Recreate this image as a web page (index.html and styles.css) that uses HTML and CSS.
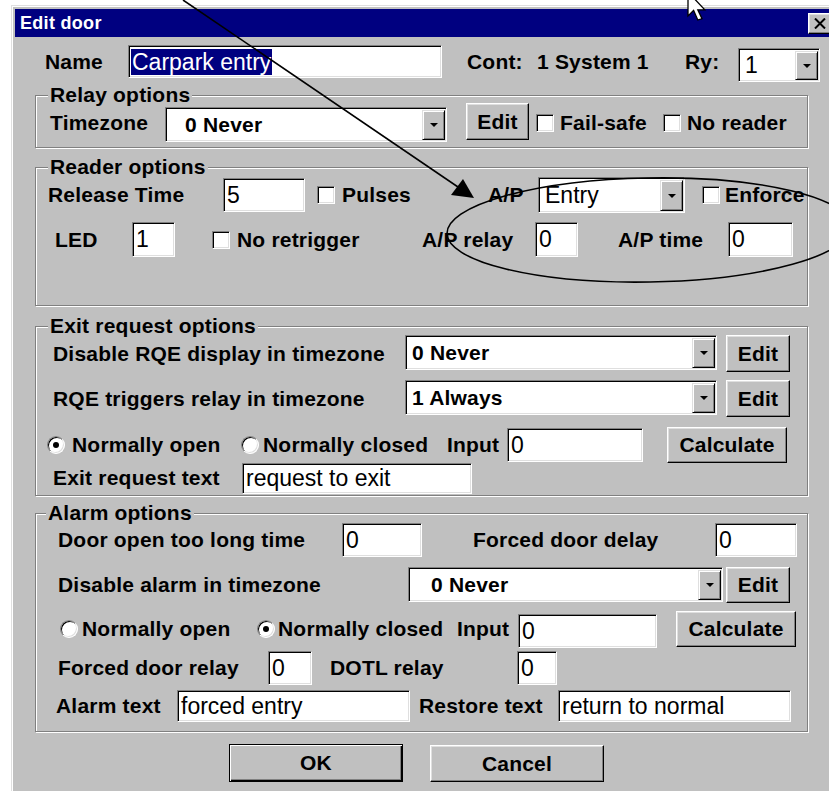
FILE: index.html
```html
<!DOCTYPE html>
<html lang="en">
<head>
<meta charset="utf-8">
<title>Edit door</title>
<link rel="stylesheet" href="styles.css">
</head>
<body>
<div class="window">
  <div class="titlebar">
    <span class="caption">Edit door</span>
    <span class="close-btn">
      <svg width="12" height="11" viewBox="0 0 12 11"><path d="M1 0.5 L11 10.5 M11 0.5 L1 10.5" stroke="#000" stroke-width="2"/></svg>
    </span>
  </div>

  <div class="client">
    <!-- door name and controller -->
    <div class="row row-name">
      <span class="lbl name-lbl">Name</span>
      <span class="edit name-edit"><span class="sel">Carpark entry</span></span>
      <span class="lbl cont-lbl">Cont:</span>
      <span class="lbl sys-lbl">1 System 1</span>
      <span class="lbl ry-lbl">Ry:</span>
      <span class="combo ry-combo"><span class="combo-val reg">1</span><span class="drop"></span></span>
    </div>

    <!-- relay -->
    <div class="group relay-group">
      <div class="group-title">Relay options</div>
      <div class="row relay-row">
        <span class="lbl tz-lbl">Timezone</span>
        <span class="combo tz-combo"><span class="combo-val">0 Never</span><span class="drop"></span></span>
        <button class="btn tz-edit">Edit</button>
        <label class="chk failsafe-chk"><span class="box"></span>Fail-safe</label>
        <label class="chk noreader-chk"><span class="box"></span>No reader</label>
      </div>
    </div>

    <!-- reader -->
    <div class="group reader-group">
      <div class="group-title">Reader options</div>
      <div class="row reader-row1">
        <span class="lbl release-lbl">Release Time</span>
        <span class="edit release-edit">5</span>
        <label class="chk pulses-chk"><span class="box"></span>Pulses</label>
        <span class="lbl ap-lbl">A/P</span>
        <span class="combo ap-combo"><span class="combo-val reg">Entry</span><span class="drop"></span></span>
        <label class="chk enforce-chk"><span class="box"></span>Enforce</label>
      </div>
      <div class="row reader-row2">
        <span class="lbl led-lbl">LED</span>
        <span class="edit small-edit">1</span>
        <label class="chk retrig-chk"><span class="box"></span>No retrigger</label>
        <span class="lbl aprelay-lbl">A/P relay</span>
        <span class="edit small-edit">0</span>
        <span class="lbl aptime-lbl">A/P time</span>
        <span class="edit aptime-edit">0</span>
      </div>
    </div>

    <!-- exit request -->
    <div class="group exit-group">
      <div class="group-title">Exit request options</div>
      <div class="row exit-row1">
        <span class="lbl rqe-lbl">Disable RQE display in timezone</span>
        <span class="combo rqe-combo"><span class="combo-val">0 Never</span><span class="drop"></span></span>
        <button class="btn rqe-edit">Edit</button>
      </div>
      <div class="row exit-row2">
        <span class="lbl rqe-lbl">RQE triggers relay in timezone</span>
        <span class="combo rqe-combo"><span class="combo-val">1 Always</span><span class="drop"></span></span>
        <button class="btn rqe-edit">Edit</button>
      </div>
      <div class="row exit-row3">
        <label class="opt exit-open"><span class="dot checked"></span>Normally open</label>
        <label class="opt exit-closed"><span class="dot"></span>Normally closed</label>
        <span class="lbl exit-input-lbl">Input</span>
        <span class="edit exit-input">0</span>
        <button class="btn calc-btn exit-calc">Calculate</button>
      </div>
      <div class="row exit-row4">
        <span class="lbl exit-text-lbl">Exit request text</span>
        <span class="edit exit-text">request to exit</span>
      </div>
    </div>

    <!-- alarm -->
    <div class="group alarm-group">
      <div class="group-title">Alarm options</div>
      <div class="row alarm-row1">
        <span class="lbl dotl-time-lbl">Door open too long time</span>
        <span class="edit dotl-time">0</span>
        <span class="lbl forced-delay-lbl">Forced door delay</span>
        <span class="edit forced-delay">0</span>
      </div>
      <div class="row alarm-row2">
        <span class="lbl alarm-tz-lbl">Disable alarm in timezone</span>
        <span class="combo alarm-combo"><span class="combo-val">0 Never</span><span class="drop"></span></span>
        <button class="btn alarm-edit">Edit</button>
      </div>
      <div class="row alarm-row3">
        <label class="opt alarm-open"><span class="dot"></span>Normally open</label>
        <label class="opt alarm-closed"><span class="dot checked"></span>Normally closed</label>
        <span class="lbl alarm-input-lbl">Input</span>
        <span class="edit alarm-input">0</span>
        <button class="btn calc-btn alarm-calc">Calculate</button>
      </div>
      <div class="row alarm-row4">
        <span class="lbl forced-relay-lbl">Forced door relay</span>
        <span class="edit forced-relay">0</span>
        <span class="lbl dotl-relay-lbl">DOTL relay</span>
        <span class="edit dotl-relay">0</span>
      </div>
      <div class="row alarm-row5">
        <span class="lbl alarm-text-lbl">Alarm text</span>
        <span class="edit text-edit">forced entry</span>
        <span class="lbl restore-text-lbl">Restore text</span>
        <span class="edit text-edit">return to normal</span>
      </div>
    </div>

    <div class="row actions">
      <button class="btn default ok-btn">OK</button>
      <button class="btn cancel-btn">Cancel</button>
    </div>
  </div>
</div>

<!-- hand-drawn callout over the A/P settings -->
<svg class="callout" width="829" height="791" viewBox="0 0 829 791">
  <line x1="183" y1="0" x2="458" y2="187" stroke="#000" stroke-width="1.6"/>
  <polygon points="451,195 463,179 474,198" fill="#000"/>
  <ellipse cx="649" cy="230" rx="202" ry="52" fill="none" stroke="#000" stroke-width="1.6" transform="rotate(-1 649 230)"/>
</svg>

<!-- mouse pointer -->
<svg class="pointer" width="20" height="32" viewBox="0 0 20 32">
  <path d="M1 1 L1 25 L6.6 19.4 L10.8 29 L15 27.6 L10.8 18.8 L17.8 18.8 Z" fill="#fff" stroke="#000" stroke-width="1.3" stroke-linejoin="miter"/>
</svg>
</body>
</html>
```

FILE: styles.css
```css
* {
  box-sizing: border-box;
}

html,
body {
  margin: 0;
  padding: 0;
}

body {
  position: relative;
  width: 829px;
  height: 791px;
  overflow: hidden;
  background: #fff;
  color: #000;
  font-family: "Liberation Sans", Arial, sans-serif;
}

/* ---- window frame ---- */
.window {
  margin: 5px 0 0 11px;
  width: 830px;
  height: 800px;
  padding: 3px;
  background: #c0c0c0;
  border-top: 1px solid #dfdfdf;
  border-left: 1px solid #dfdfdf;
  box-shadow: inset 1px 1px #fff;
}

.titlebar {
  display: flex;
  align-items: center;
  height: 28px;
  padding-left: 5px;
  background: #000080;
}

.caption {
  color: #fff;
  font-weight: bold;
  font-size: 18px;
  letter-spacing: 0.3px;
}

.close-btn {
  display: flex;
  align-items: center;
  justify-content: center;
  margin-left: auto;
  margin-right: 6px;
  width: 24px;
  height: 21px;
  background: #c0c0c0;
  border: 1px solid;
  border-color: #fff #000 #000 #fff;
  box-shadow: inset -1px -1px #808080, inset 1px 1px #dfdfdf;
}

/* ---- generic controls ---- */
.row {
  display: flex;
  align-items: center;
}

.lbl {
  flex: none;
  white-space: nowrap;
  font-weight: bold;
  font-size: 21px;
  letter-spacing: 0.2px;
}

.edit {
  flex: none;
  display: flex;
  align-items: center;
  overflow: hidden;
  white-space: nowrap;
  padding-left: 3px;
  background: #fff;
  border: 1px solid;
  border-color: #808080 #fff #fff #808080;
  box-shadow: inset 1px 1px #000, inset -1px -1px #dfdfdf;
  font-size: 23px;
}

.combo {
  flex: none;
  display: flex;
  align-items: stretch;
  background: #fff;
  border: 1px solid;
  border-color: #808080 #fff #fff #808080;
  box-shadow: inset 1px 1px #000, inset -1px -1px #dfdfdf;
  padding: 2px 1px 1px 2px;
}

.combo-val {
  flex: 1;
  display: flex;
  align-items: center;
  white-space: nowrap;
  font-weight: bold;
  font-size: 21px;
  letter-spacing: 0.2px;
}

.combo-val.reg {
  font-weight: normal;
  font-size: 23px;
  letter-spacing: 0;
}

.drop {
  flex: none;
  display: flex;
  align-items: center;
  justify-content: center;
  width: 23px;
  background: #c0c0c0;
  border: 1px solid;
  border-color: #dfdfdf #000 #000 #dfdfdf;
  box-shadow: inset 1px 1px #fff, inset -1px -1px #808080;
}

.drop::after {
  content: "";
  border-left: 4px solid transparent;
  border-right: 4px solid transparent;
  border-top: 4px solid #000;
}

.btn {
  flex: none;
  display: flex;
  align-items: center;
  justify-content: center;
  padding: 0;
  margin: 0;
  background: #c0c0c0;
  border: 1px solid;
  border-color: #fff #000 #000 #fff;
  box-shadow: inset -1px -1px #808080, inset 1px 1px #dfdfdf;
  font-family: "Liberation Sans", Arial, sans-serif;
  font-weight: bold;
  font-size: 21px;
  letter-spacing: 0.2px;
  color: #000;
}

.btn.default {
  border-color: #000;
  box-shadow: inset 1px 1px #fff, inset -1px -1px #000, inset -2px -2px #808080;
}

.chk,
.opt {
  flex: none;
  display: flex;
  align-items: center;
  white-space: nowrap;
  font-weight: bold;
  font-size: 21px;
  letter-spacing: 0.2px;
}

.box {
  flex: none;
  width: 18px;
  height: 18px;
  background: #fff;
  border: 1px solid;
  border-color: #808080 #fff #fff #808080;
  box-shadow: inset 1px 1px #000, inset -1px -1px #dfdfdf;
}

.dot {
  flex: none;
  position: relative;
  width: 18px;
  height: 18px;
  border-radius: 50%;
  background: #fff;
  border: 1px solid;
  border-color: #808080 #fff #fff #808080;
  box-shadow: inset 1px 1px #000, inset -1px -1px #dfdfdf;
}

.dot.checked::after {
  content: "";
  position: absolute;
  left: 5px;
  top: 5px;
  width: 6px;
  height: 6px;
  border-radius: 50%;
  background: #000;
}

/* ---- group boxes ---- */
.group {
  margin-left: 20px;
  width: 773px;
  border: 1px solid #808080;
  box-shadow: inset 1px 1px #fff, 1px 1px 0 #fff;
}

.group-title {
  width: fit-content;
  height: 24px;
  line-height: 24px;
  margin: -13px 0 0 12px;
  padding: 0 2px;
  background: #c0c0c0;
  font-weight: bold;
  font-size: 21px;
  letter-spacing: 0.2px;
  white-space: nowrap;
}

/* ---- name row ---- */
.row-name {
  margin-top: 8px;
  height: 33px;
}

.name-lbl {
  margin-left: 30px;
  width: 83px;
}

.name-edit {
  width: 314px;
  height: 33px;
  padding-left: 2px;
}

.sel {
  padding: 0 1px;
  line-height: 26px;
  background: #000080;
  color: #fff;
}

.cont-lbl {
  margin-left: 25px;
  width: 70px;
}

.sys-lbl {
  width: 148px;
}

.ry-lbl {
  width: 53px;
}

.ry-combo {
  width: 82px;
  height: 34px;
  margin-top: 7px;
}

.ry-combo .combo-val {
  padding-left: 4px;
}

/* ---- relay options ---- */
.relay-group {
  margin-top: 17px;
  height: 53px;
}

.relay-row {
  height: 31px;
}

.tz-lbl {
  margin-left: 14px;
  width: 115px;
}

.tz-combo {
  width: 282px;
  height: 35px;
  margin-top: 4px;
}

.tz-combo .combo-val {
  padding-left: 17px;
}

.tz-edit {
  margin-left: 19px;
  width: 63px;
  height: 37px;
  margin-bottom: 2px;
}

.failsafe-chk {
  margin-left: 7px;
  width: 127px;
  gap: 6px;
}

.noreader-chk {
  gap: 6px;
}

/* ---- reader options ---- */
.reader-group {
  margin-top: 19px;
  height: 139px;
}

.reader-row1 {
  margin-top: -1px;
  height: 34px;
}

.release-lbl {
  margin-left: 12px;
  width: 175px;
}

.release-edit {
  width: 82px;
  height: 34px;
}

.pulses-chk {
  margin-left: 12px;
  width: 171px;
  gap: 7px;
}

.ap-lbl {
  width: 50px;
}

.ap-combo {
  width: 147px;
  height: 36px;
}

.ap-combo .combo-val {
  padding-left: 4px;
}

.enforce-chk {
  margin-left: 17px;
  gap: 5px;
}

.reader-row2 {
  margin-top: 10px;
  height: 35px;
}

.led-lbl {
  margin-left: 19px;
  width: 77px;
}

.small-edit {
  width: 43px;
  height: 35px;
}

.retrig-chk {
  margin-left: 37px;
  width: 210px;
  gap: 7px;
}

.aprelay-lbl {
  width: 113px;
}

.aptime-lbl {
  margin-left: 40px;
  width: 110px;
}

.aptime-edit {
  width: 65px;
  height: 35px;
}

/* ---- exit request options ---- */
.exit-group {
  margin-top: 20px;
  height: 170px;
}

.exit-row1 {
  margin-top: -3px;
  height: 37px;
}

.exit-row2 {
  margin-top: 8px;
  height: 37px;
}

.rqe-lbl {
  margin-left: 17px;
  width: 352px;
}

.rqe-combo {
  width: 312px;
  height: 35px;
  margin-bottom: 2px;
}

.rqe-combo .combo-val {
  padding-left: 4px;
}

.rqe-edit {
  margin-left: 9px;
  width: 64px;
  height: 37px;
}

.exit-row3 {
  margin-top: 10px;
  height: 36px;
}

.exit-open {
  margin-left: 11px;
  width: 194px;
  gap: 7px;
}

.exit-closed {
  width: 206px;
  gap: 4px;
}

.exit-input-lbl {
  width: 60px;
}

.exit-input {
  width: 136px;
  height: 34px;
}

.calc-btn {
  width: 120px;
  height: 36px;
}

.exit-calc {
  margin-left: 24px;
}

.exit-row4 {
  margin-top: -1px;
  height: 32px;
}

.exit-text-lbl {
  margin-left: 17px;
  width: 189px;
}

.exit-text {
  width: 230px;
  height: 31px;
}

/* ---- alarm options ---- */
.alarm-group {
  margin-top: 17px;
  height: 219px;
}

.alarm-group .group-title {
  margin-left: 10px;
}

.alarm-row1 {
  margin-top: -2px;
  height: 34px;
}

.dotl-time-lbl {
  margin-left: 22px;
  width: 284px;
}

.dotl-time {
  width: 80px;
  height: 34px;
}

.forced-delay-lbl {
  margin-left: 51px;
  width: 242px;
}

.forced-delay {
  width: 82px;
  height: 34px;
}

.alarm-row2 {
  margin-top: 10px;
  height: 36px;
}

.alarm-tz-lbl {
  margin-left: 22px;
  width: 350px;
}

.alarm-combo {
  width: 315px;
  height: 35px;
  margin-bottom: 1px;
}

.alarm-combo .combo-val {
  padding-left: 20px;
}

.alarm-edit {
  margin-left: 3px;
  width: 64px;
  height: 36px;
}

.alarm-row3 {
  margin-top: 8px;
  height: 36px;
}

.alarm-open {
  margin-left: 24px;
  width: 197px;
  gap: 4px;
}

.alarm-closed {
  width: 200px;
  gap: 3px;
}

.alarm-input-lbl {
  width: 61px;
}

.alarm-input {
  width: 139px;
  height: 34px;
  margin-top: 4px;
}

.alarm-calc {
  margin-left: 19px;
}

.alarm-row4 {
  margin-top: 4px;
  height: 34px;
}

.forced-relay-lbl {
  margin-left: 22px;
  width: 210px;
}

.forced-relay {
  width: 44px;
  height: 34px;
}

.dotl-relay-lbl {
  margin-left: 18px;
  width: 187px;
}

.dotl-relay {
  width: 40px;
  height: 34px;
}

.alarm-row5 {
  margin-top: 5px;
  height: 32px;
}

.alarm-text-lbl {
  margin-left: 20px;
  width: 121px;
}

.restore-text-lbl {
  margin-left: 9px;
  width: 139px;
}

.text-edit {
  width: 233px;
  height: 32px;
}

/* ---- dialog buttons ---- */
.actions {
  margin-top: 12px;
  align-items: flex-start;
}

.ok-btn {
  margin-left: 214px;
  width: 174px;
  height: 38px;
}

.cancel-btn {
  margin-left: 27px;
  width: 174px;
  height: 37px;
  margin-top: 1px;
}

/* ---- overlays ---- */
.callout {
  position: absolute;
  left: 0;
  top: 0;
  pointer-events: none;
}

.pointer {
  position: absolute;
  left: 687px;
  top: -9px;
  pointer-events: none;
}
```
